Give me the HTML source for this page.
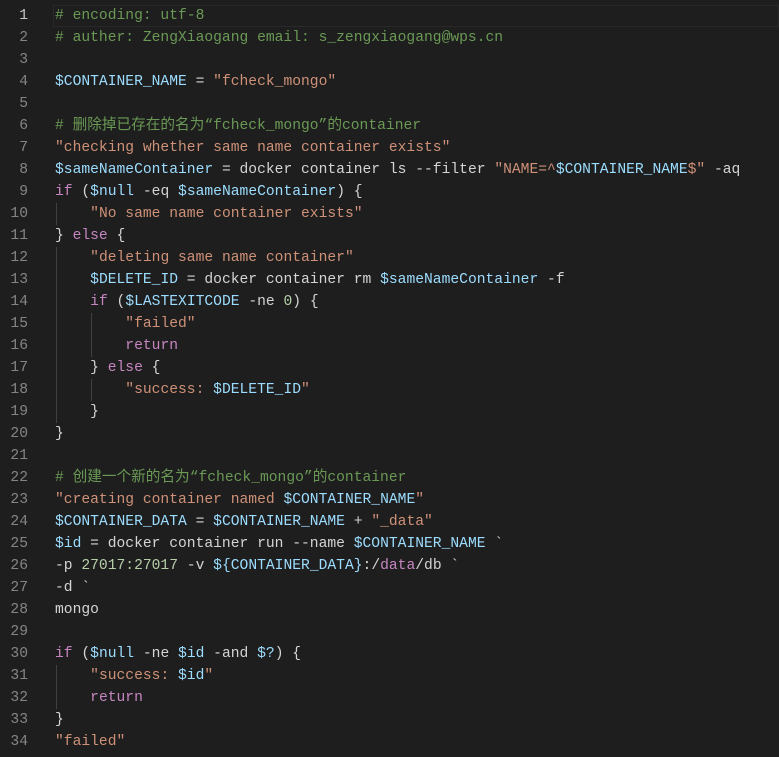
<!DOCTYPE html>
<html><head><meta charset="utf-8"><style>
html,body{margin:0;padding:0;background:#1e1e1e;width:779px;height:757px;overflow:hidden}
.ed{position:absolute;left:0;top:5px;width:779px;font-family:"Liberation Mono","Noto Sans CJK SC",monospace;font-size:14.65px;color:#d4d4d4}
.l{height:22px;line-height:22px;position:relative;white-space:pre}
.n{position:absolute;left:0;width:28px;text-align:right;color:#858585}
.c{position:absolute;left:55px}
.cur{position:absolute;left:53px;right:0;top:0;height:20px;border:1px solid #282828}
.g{position:absolute;top:0;width:1px;height:22px;background:#404040}
.k{color:#c586c0}.v{color:#9cdcfe}.s{color:#ce9178}.m{color:#6a9955}.d{color:#b5cea8}
</style></head><body>
<div class="ed">
<div class="l"><div class="cur"></div><span class="n" style="color:#c6c6c6">1</span><span class="c m"># encoding: utf-8</span></div>
<div class="l"><span class="n">2</span><span class="c m"># auther: ZengXiaogang email: s_zengxiaogang@wps.cn</span></div>
<div class="l"><span class="n">3</span></div>
<div class="l"><span class="n">4</span><span class="c"><span class="v">$CONTAINER_NAME</span> = <span class="s">"fcheck_mongo"</span></span></div>
<div class="l"><span class="n">5</span></div>
<div class="l"><span class="n">6</span><span class="c m"># 删除掉已存在的名为“fcheck_mongo”的container</span></div>
<div class="l"><span class="n">7</span><span class="c s">"checking whether same name container exists"</span></div>
<div class="l"><span class="n">8</span><span class="c"><span class="v">$sameNameContainer</span> = docker container ls --filter <span class="s">"NAME=^</span><span class="v">$CONTAINER_NAME</span><span class="s">$"</span> -aq</span></div>
<div class="l"><span class="n">9</span><span class="c"><span class="k">if</span> (<span class="v">$null</span> -eq <span class="v">$sameNameContainer</span>) {</span></div>
<div class="l"><span class="n">10</span><span class="g" style="left:56px"></span><span class="c">    <span class="s">"No same name container exists"</span></span></div>
<div class="l"><span class="n">11</span><span class="c">} <span class="k">else</span> {</span></div>
<div class="l"><span class="n">12</span><span class="g" style="left:56px"></span><span class="c">    <span class="s">"deleting same name container"</span></span></div>
<div class="l"><span class="n">13</span><span class="g" style="left:56px"></span><span class="c">    <span class="v">$DELETE_ID</span> = docker container rm <span class="v">$sameNameContainer</span> -f</span></div>
<div class="l"><span class="n">14</span><span class="g" style="left:56px"></span><span class="c">    <span class="k">if</span> (<span class="v">$LASTEXITCODE</span> -ne <span class="d">0</span>) {</span></div>
<div class="l"><span class="n">15</span><span class="g" style="left:56px"></span><span class="g" style="left:91px"></span><span class="c">        <span class="s">"failed"</span></span></div>
<div class="l"><span class="n">16</span><span class="g" style="left:56px"></span><span class="g" style="left:91px"></span><span class="c">        <span class="k">return</span></span></div>
<div class="l"><span class="n">17</span><span class="g" style="left:56px"></span><span class="c">    } <span class="k">else</span> {</span></div>
<div class="l"><span class="n">18</span><span class="g" style="left:56px"></span><span class="g" style="left:91px"></span><span class="c">        <span class="s">"success: </span><span class="v">$DELETE_ID</span><span class="s">"</span></span></div>
<div class="l"><span class="n">19</span><span class="g" style="left:56px"></span><span class="c">    }</span></div>
<div class="l"><span class="n">20</span><span class="c">}</span></div>
<div class="l"><span class="n">21</span></div>
<div class="l"><span class="n">22</span><span class="c m"># 创建一个新的名为“fcheck_mongo”的container</span></div>
<div class="l"><span class="n">23</span><span class="c"><span class="s">"creating container named </span><span class="v">$CONTAINER_NAME</span><span class="s">"</span></span></div>
<div class="l"><span class="n">24</span><span class="c"><span class="v">$CONTAINER_DATA</span> = <span class="v">$CONTAINER_NAME</span> + <span class="s">"_data"</span></span></div>
<div class="l"><span class="n">25</span><span class="c"><span class="v">$id</span> = docker container run --name <span class="v">$CONTAINER_NAME</span> `</span></div>
<div class="l"><span class="n">26</span><span class="c">-p <span class="d">27017:27017</span> -v <span class="v">${CONTAINER_DATA}</span>:/<span class="k">data</span>/db `</span></div>
<div class="l"><span class="n">27</span><span class="c">-d `</span></div>
<div class="l"><span class="n">28</span><span class="c">mongo</span></div>
<div class="l"><span class="n">29</span></div>
<div class="l"><span class="n">30</span><span class="c"><span class="k">if</span> (<span class="v">$null</span> -ne <span class="v">$id</span> -and <span class="v">$?</span>) {</span></div>
<div class="l"><span class="n">31</span><span class="g" style="left:56px"></span><span class="c">    <span class="s">"success: </span><span class="v">$id</span><span class="s">"</span></span></div>
<div class="l"><span class="n">32</span><span class="g" style="left:56px"></span><span class="c">    <span class="k">return</span></span></div>
<div class="l"><span class="n">33</span><span class="c">}</span></div>
<div class="l"><span class="n">34</span><span class="c s">"failed"</span></div>
</div>
</body></html>
